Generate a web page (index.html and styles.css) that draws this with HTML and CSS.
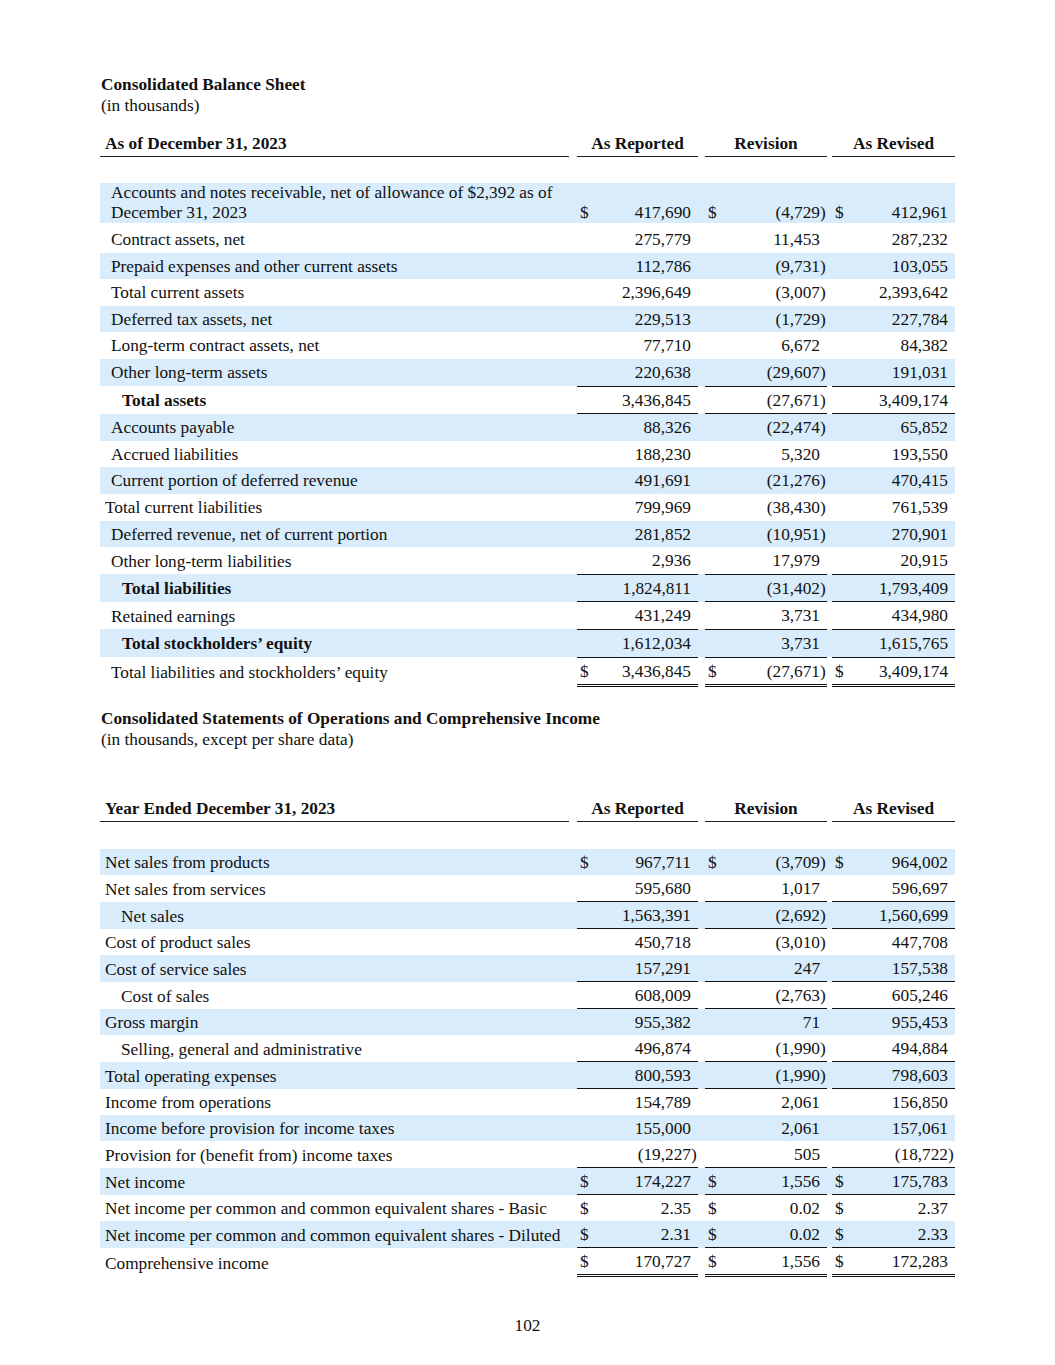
FILE: index.html
```html
<!DOCTYPE html>
<html lang="en">
<head>
<meta charset="utf-8">
<title>Consolidated Balance Sheet</title>
<link rel="stylesheet" href="styles.css">
</head>
<body>
<main class="page">
  <section class="statement">
    <div class="title">Consolidated Balance Sheet</div>
    <div class="subtitle">(in thousands)</div>
    <table class="fin bs">
      <colgroup>
        <col class="c-lbl"><col class="c-sp1"><col class="c-d"><col class="c-n1"><col class="c-p">
        <col class="c-sp2"><col class="c-d"><col class="c-n2"><col class="c-p">
        <col class="c-sp3"><col class="c-d"><col class="c-n3"><col class="c-p">
      </colgroup>
      <thead>
        <tr class="hd">
          <th class="hl">As of December 31, 2023</th><th class="sp"></th>
          <th class="hv" colspan="3">As Reported</th><th class="sp"></th>
          <th class="hv" colspan="3">Revision</th><th class="sp"></th>
          <th class="hv" colspan="3">As Revised</th>
        </tr>
        <tr class="gap"><td colspan="13"></td></tr>
      </thead>
      <tbody>
        <tr class="b multi"><td class="lbl i1">Accounts and notes receivable, net of allowance of $2,392 as of December 31, 2023</td><td class="sp"></td><td class="d">$</td><td class="n">417,690</td><td class="p"></td><td class="sp"></td><td class="d">$</td><td class="n">(4,729</td><td class="p">)</td><td class="sp"></td><td class="d">$</td><td class="n">412,961</td><td class="p"></td></tr>
        <tr class="after-multi"><td class="lbl i1">Contract assets, net</td><td class="sp"></td><td class="d"></td><td class="n">275,779</td><td class="p"></td><td class="sp"></td><td class="d"></td><td class="n">11,453</td><td class="p"></td><td class="sp"></td><td class="d"></td><td class="n">287,232</td><td class="p"></td></tr>
        <tr class="b"><td class="lbl i1">Prepaid expenses and other current assets</td><td class="sp"></td><td class="d"></td><td class="n">112,786</td><td class="p"></td><td class="sp"></td><td class="d"></td><td class="n">(9,731</td><td class="p">)</td><td class="sp"></td><td class="d"></td><td class="n">103,055</td><td class="p"></td></tr>
        <tr><td class="lbl i1">Total current assets</td><td class="sp"></td><td class="d"></td><td class="n">2,396,649</td><td class="p"></td><td class="sp"></td><td class="d"></td><td class="n">(3,007</td><td class="p">)</td><td class="sp"></td><td class="d"></td><td class="n">2,393,642</td><td class="p"></td></tr>
        <tr class="b"><td class="lbl i1">Deferred tax assets, net</td><td class="sp"></td><td class="d"></td><td class="n">229,513</td><td class="p"></td><td class="sp"></td><td class="d"></td><td class="n">(1,729</td><td class="p">)</td><td class="sp"></td><td class="d"></td><td class="n">227,784</td><td class="p"></td></tr>
        <tr><td class="lbl i1">Long-term contract assets, net</td><td class="sp"></td><td class="d"></td><td class="n">77,710</td><td class="p"></td><td class="sp"></td><td class="d"></td><td class="n">6,672</td><td class="p"></td><td class="sp"></td><td class="d"></td><td class="n">84,382</td><td class="p"></td></tr>
        <tr class="b ul"><td class="lbl i1">Other long-term assets</td><td class="sp"></td><td class="d"></td><td class="n">220,638</td><td class="p"></td><td class="sp"></td><td class="d"></td><td class="n">(29,607</td><td class="p">)</td><td class="sp"></td><td class="d"></td><td class="n">191,031</td><td class="p"></td></tr>
        <tr class="ul tot"><td class="lbl i2">Total assets</td><td class="sp"></td><td class="d"></td><td class="n">3,436,845</td><td class="p"></td><td class="sp"></td><td class="d"></td><td class="n">(27,671</td><td class="p">)</td><td class="sp"></td><td class="d"></td><td class="n">3,409,174</td><td class="p"></td></tr>
        <tr class="b"><td class="lbl i1">Accounts payable</td><td class="sp"></td><td class="d"></td><td class="n">88,326</td><td class="p"></td><td class="sp"></td><td class="d"></td><td class="n">(22,474</td><td class="p">)</td><td class="sp"></td><td class="d"></td><td class="n">65,852</td><td class="p"></td></tr>
        <tr><td class="lbl i1">Accrued liabilities</td><td class="sp"></td><td class="d"></td><td class="n">188,230</td><td class="p"></td><td class="sp"></td><td class="d"></td><td class="n">5,320</td><td class="p"></td><td class="sp"></td><td class="d"></td><td class="n">193,550</td><td class="p"></td></tr>
        <tr class="b"><td class="lbl i1">Current portion of deferred revenue</td><td class="sp"></td><td class="d"></td><td class="n">491,691</td><td class="p"></td><td class="sp"></td><td class="d"></td><td class="n">(21,276</td><td class="p">)</td><td class="sp"></td><td class="d"></td><td class="n">470,415</td><td class="p"></td></tr>
        <tr><td class="lbl i0">Total current liabilities</td><td class="sp"></td><td class="d"></td><td class="n">799,969</td><td class="p"></td><td class="sp"></td><td class="d"></td><td class="n">(38,430</td><td class="p">)</td><td class="sp"></td><td class="d"></td><td class="n">761,539</td><td class="p"></td></tr>
        <tr class="b"><td class="lbl i1">Deferred revenue, net of current portion</td><td class="sp"></td><td class="d"></td><td class="n">281,852</td><td class="p"></td><td class="sp"></td><td class="d"></td><td class="n">(10,951</td><td class="p">)</td><td class="sp"></td><td class="d"></td><td class="n">270,901</td><td class="p"></td></tr>
        <tr class="ul"><td class="lbl i1">Other long-term liabilities</td><td class="sp"></td><td class="d"></td><td class="n">2,936</td><td class="p"></td><td class="sp"></td><td class="d"></td><td class="n">17,979</td><td class="p"></td><td class="sp"></td><td class="d"></td><td class="n">20,915</td><td class="p"></td></tr>
        <tr class="b ul tot"><td class="lbl i2">Total liabilities</td><td class="sp"></td><td class="d"></td><td class="n">1,824,811</td><td class="p"></td><td class="sp"></td><td class="d"></td><td class="n">(31,402</td><td class="p">)</td><td class="sp"></td><td class="d"></td><td class="n">1,793,409</td><td class="p"></td></tr>
        <tr class="ul"><td class="lbl i1">Retained earnings</td><td class="sp"></td><td class="d"></td><td class="n">431,249</td><td class="p"></td><td class="sp"></td><td class="d"></td><td class="n">3,731</td><td class="p"></td><td class="sp"></td><td class="d"></td><td class="n">434,980</td><td class="p"></td></tr>
        <tr class="b ul tot"><td class="lbl i2">Total stockholders’ equity</td><td class="sp"></td><td class="d"></td><td class="n">1,612,034</td><td class="p"></td><td class="sp"></td><td class="d"></td><td class="n">3,731</td><td class="p"></td><td class="sp"></td><td class="d"></td><td class="n">1,615,765</td><td class="p"></td></tr>
        <tr class="dl"><td class="lbl i1">Total liabilities and stockholders’ equity</td><td class="sp"></td><td class="d">$</td><td class="n">3,436,845</td><td class="p"></td><td class="sp"></td><td class="d">$</td><td class="n">(27,671</td><td class="p">)</td><td class="sp"></td><td class="d">$</td><td class="n">3,409,174</td><td class="p"></td></tr>
      </tbody>
    </table>
  </section>

  <section class="statement second">
    <div class="title">Consolidated Statements of Operations and Comprehensive Income</div>
    <div class="subtitle">(in thousands, except per share data)</div>
    <table class="fin is">
      <colgroup>
        <col class="c-lbl"><col class="c-sp1"><col class="c-d"><col class="c-n1"><col class="c-p">
        <col class="c-sp2"><col class="c-d"><col class="c-n2"><col class="c-p">
        <col class="c-sp3"><col class="c-d"><col class="c-n3"><col class="c-p">
      </colgroup>
      <thead>
        <tr class="hd">
          <th class="hl">Year Ended December 31, 2023</th><th class="sp"></th>
          <th class="hv" colspan="3">As Reported</th><th class="sp"></th>
          <th class="hv" colspan="3">Revision</th><th class="sp"></th>
          <th class="hv" colspan="3">As Revised</th>
        </tr>
        <tr class="gap"><td colspan="13"></td></tr>
      </thead>
      <tbody>
        <tr class="b"><td class="lbl i0">Net sales from products</td><td class="sp"></td><td class="d">$</td><td class="n">967,711</td><td class="p"></td><td class="sp"></td><td class="d">$</td><td class="n">(3,709</td><td class="p">)</td><td class="sp"></td><td class="d">$</td><td class="n">964,002</td><td class="p"></td></tr>
        <tr class="ul"><td class="lbl i0">Net sales from services</td><td class="sp"></td><td class="d"></td><td class="n">595,680</td><td class="p"></td><td class="sp"></td><td class="d"></td><td class="n">1,017</td><td class="p"></td><td class="sp"></td><td class="d"></td><td class="n">596,697</td><td class="p"></td></tr>
        <tr class="b ul"><td class="lbl i3">Net sales</td><td class="sp"></td><td class="d"></td><td class="n">1,563,391</td><td class="p"></td><td class="sp"></td><td class="d"></td><td class="n">(2,692</td><td class="p">)</td><td class="sp"></td><td class="d"></td><td class="n">1,560,699</td><td class="p"></td></tr>
        <tr><td class="lbl i0">Cost of product sales</td><td class="sp"></td><td class="d"></td><td class="n">450,718</td><td class="p"></td><td class="sp"></td><td class="d"></td><td class="n">(3,010</td><td class="p">)</td><td class="sp"></td><td class="d"></td><td class="n">447,708</td><td class="p"></td></tr>
        <tr class="b ul"><td class="lbl i0">Cost of service sales</td><td class="sp"></td><td class="d"></td><td class="n">157,291</td><td class="p"></td><td class="sp"></td><td class="d"></td><td class="n">247</td><td class="p"></td><td class="sp"></td><td class="d"></td><td class="n">157,538</td><td class="p"></td></tr>
        <tr class="ul"><td class="lbl i3">Cost of sales</td><td class="sp"></td><td class="d"></td><td class="n">608,009</td><td class="p"></td><td class="sp"></td><td class="d"></td><td class="n">(2,763</td><td class="p">)</td><td class="sp"></td><td class="d"></td><td class="n">605,246</td><td class="p"></td></tr>
        <tr class="b"><td class="lbl i0">Gross margin</td><td class="sp"></td><td class="d"></td><td class="n">955,382</td><td class="p"></td><td class="sp"></td><td class="d"></td><td class="n">71</td><td class="p"></td><td class="sp"></td><td class="d"></td><td class="n">955,453</td><td class="p"></td></tr>
        <tr class="ul"><td class="lbl i3">Selling, general and administrative</td><td class="sp"></td><td class="d"></td><td class="n">496,874</td><td class="p"></td><td class="sp"></td><td class="d"></td><td class="n">(1,990</td><td class="p">)</td><td class="sp"></td><td class="d"></td><td class="n">494,884</td><td class="p"></td></tr>
        <tr class="b ul"><td class="lbl i0">Total operating expenses</td><td class="sp"></td><td class="d"></td><td class="n">800,593</td><td class="p"></td><td class="sp"></td><td class="d"></td><td class="n">(1,990</td><td class="p">)</td><td class="sp"></td><td class="d"></td><td class="n">798,603</td><td class="p"></td></tr>
        <tr><td class="lbl i0">Income from operations</td><td class="sp"></td><td class="d"></td><td class="n">154,789</td><td class="p"></td><td class="sp"></td><td class="d"></td><td class="n">2,061</td><td class="p"></td><td class="sp"></td><td class="d"></td><td class="n">156,850</td><td class="p"></td></tr>
        <tr class="b"><td class="lbl i0">Income before provision for income taxes</td><td class="sp"></td><td class="d"></td><td class="n">155,000</td><td class="p"></td><td class="sp"></td><td class="d"></td><td class="n">2,061</td><td class="p"></td><td class="sp"></td><td class="d"></td><td class="n">157,061</td><td class="p"></td></tr>
        <tr class="ul"><td class="lbl i0">Provision for (benefit from) income taxes</td><td class="sp"></td><td class="d"></td><td class="n">(19,227</td><td class="p">)</td><td class="sp"></td><td class="d"></td><td class="n">505</td><td class="p"></td><td class="sp"></td><td class="d"></td><td class="n">(18,722</td><td class="p">)</td></tr>
        <tr class="b ul"><td class="lbl i0">Net income</td><td class="sp"></td><td class="d">$</td><td class="n">174,227</td><td class="p"></td><td class="sp"></td><td class="d">$</td><td class="n">1,556</td><td class="p"></td><td class="sp"></td><td class="d">$</td><td class="n">175,783</td><td class="p"></td></tr>
        <tr><td class="lbl i0">Net income per common and common equivalent shares - Basic</td><td class="sp"></td><td class="d">$</td><td class="n">2.35</td><td class="p"></td><td class="sp"></td><td class="d">$</td><td class="n">0.02</td><td class="p"></td><td class="sp"></td><td class="d">$</td><td class="n">2.37</td><td class="p"></td></tr>
        <tr class="b ul"><td class="lbl i0">Net income per common and common equivalent shares - Diluted</td><td class="sp"></td><td class="d">$</td><td class="n">2.31</td><td class="p"></td><td class="sp"></td><td class="d">$</td><td class="n">0.02</td><td class="p"></td><td class="sp"></td><td class="d">$</td><td class="n">2.33</td><td class="p"></td></tr>
        <tr class="dl"><td class="lbl i0">Comprehensive income</td><td class="sp"></td><td class="d">$</td><td class="n">170,727</td><td class="p"></td><td class="sp"></td><td class="d">$</td><td class="n">1,556</td><td class="p"></td><td class="sp"></td><td class="d">$</td><td class="n">172,283</td><td class="p"></td></tr>
      </tbody>
    </table>
  </section>

  <footer class="pageno">102</footer>
</main>
</body>
</html>
```

FILE: styles.css
```css
html, body {
  margin: 0;
  padding: 0;
  background: #ffffff;
}

body {
  font-family: "Liberation Serif", "Times New Roman", serif;
  font-size: 17.3px;
  color: #111111;
}

.page {
  width: 1055px;
  padding-top: 74px;
  box-sizing: border-box;
}

.statement {
  margin-left: 100px;
  width: 854px;
}

.statement.second {
  margin-top: 21px;
}

.title {
  font-weight: bold;
  line-height: 21px;
  padding-left: 1px;
}

.subtitle {
  line-height: 21px;
  padding-left: 1px;
}

.fin {
  width: 854px;
  table-layout: fixed;
  border-collapse: collapse;
  margin-top: 18px;
}

.fin.is {
  margin-top: 49px;
}

.c-lbl { width: 469px; }
.c-sp1 { width: 8px; }
.c-sp2 { width: 7px; }
.c-sp3 { width: 5px; }
.c-d { width: 20px; }
.c-n1 { width: 94px; }
.c-n2 { width: 95px; }
.c-n3 { width: 96px; }
.c-p { width: 7px; }

.fin th,
.fin td {
  padding: 0;
  line-height: 20px;
  vertical-align: bottom;
  white-space: nowrap;
}

.hd th {
  font-weight: bold;
  padding-bottom: 2px;
}

.hd .hl {
  text-align: left;
  padding-left: 5px;
  border-bottom: 1px solid #222;
}

.hd .hv {
  text-align: center;
  border-bottom: 1px solid #222;
}

.gap td {
  height: 26px;
}

.is .gap td {
  height: 27px;
}

.fin tbody td {
  padding-top: 4px;
  padding-bottom: 2.6px;
}

.fin.is tbody td {
  padding-top: 4px;
  padding-bottom: 2px;
}

.fin tbody tr.multi td {
  padding-top: 0;
  padding-bottom: 0;
}

.fin tbody tr.multi td.lbl {
  white-space: normal;
}

.fin tbody tr.after-multi td {
  padding-top: 7px;
}

tr.b td {
  background: #d8ecfb;
}

.lbl {
  text-align: left;
  overflow: hidden;
}

.i0 { padding-left: 5px !important; }
.i1 { padding-left: 11px !important; }
.i2 { padding-left: 22px !important; }
.i3 { padding-left: 21px !important; }

tr.tot .lbl {
  font-weight: bold;
}

.d {
  text-align: left;
  padding-left: 3px !important;
}

.n {
  text-align: right;
}

.p {
  text-align: left;
}

tr.ul td.d,
tr.ul td.n,
tr.ul td.p {
  border-bottom: 1px solid #111;
}

tr.dl td.d,
tr.dl td.n,
tr.dl td.p {
  border-bottom: 3px double #111;
}

.pageno {
  text-align: center;
  line-height: 20px;
  margin-top: 39px;
}
```
